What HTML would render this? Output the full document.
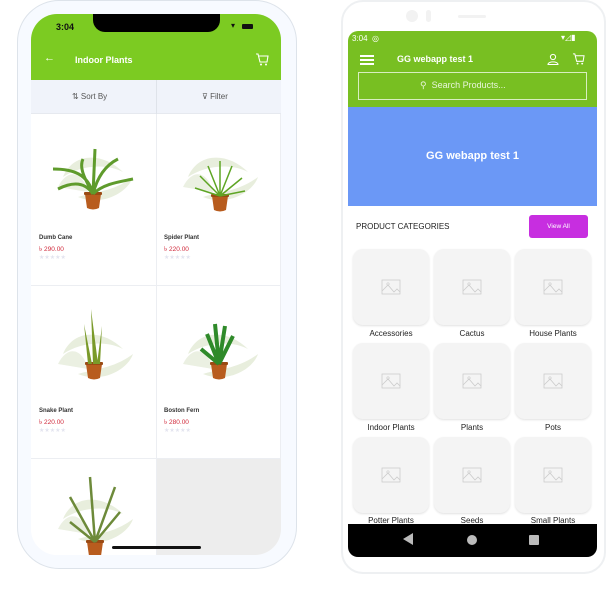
<!DOCTYPE html>
<html><head><meta charset="utf-8"><style>
*{box-sizing:border-box;margin:0;padding:0}
body{width:611px;height:589px;background:#fff;position:relative;overflow:hidden;font-family:"Liberation Sans",sans-serif}
.abs{position:absolute}
.lframe{left:17px;top:0;width:280px;height:569px;border:1px solid #dde3ea;border-radius:42px;background:#f7faff}
.lscreen{left:31px;top:14px;width:250px;height:541px;border-radius:26px;overflow:hidden;background:#fff}
.cell{position:absolute;background:#fff;border-right:1px solid #eceef2;border-bottom:1px solid #eceef2}
.name{position:absolute;left:8px;font-size:6px;color:#333;font-weight:bold}
.price{position:absolute;left:8px;font-size:6.5px;color:#d0293b}
.stars{position:absolute;left:8px;font-size:6px;color:#e3e4ef;letter-spacing:0}
.rframe{left:341px;top:0;width:265px;height:574px;border:2px solid #eef0f2;border-radius:22px;background:#fff}
.rscreen{left:348px;top:31px;width:249px;height:525px;border-radius:10px;overflow:hidden;background:#fff}
.tile{position:absolute;width:76px;height:76px;background:#f4f4f4;border-radius:10px;box-shadow:0 1px 2px rgba(0,0,0,.12)}
.lab{position:absolute;width:76px;text-align:center;font-size:8px;color:#222}
</style></head><body>
<svg width="0" height="0" style="position:absolute"><defs>
<g id="bg"><path d="M-30 0 C-20 -25 10 -25 30 -5 C10 -15 -15 -10 -30 0Z" fill="#e8eedd"/><path d="M-35 10 C-25 -10 -10 -5 -5 15Z" fill="#ebf0e2"/><path d="M-15 20 C10 30 35 15 40 0 C20 15 0 15 -15 20Z" fill="#e8eedd"/></g>
<g id="pot"><path d="M-8 0 L8 0 L6 14 Q0 17 -6 14Z" fill="#b85c1e"/><rect x="-9" y="-2" width="18" height="3" rx="1" fill="#9a4a14"/></g>
<g id="ph"><rect x="-9" y="-7" width="18" height="14" fill="none" stroke="#ccc" stroke-width="0.8"/><path d="M-9 4 L-3 -2 L3 5 L6 2 L9 5" fill="none" stroke="#ccc" stroke-width="0.8"/><circle cx="-3" cy="-3" r="1.2" fill="none" stroke="#ccc" stroke-width="0.6"/></g>
</defs></svg>

<div class="abs lframe"></div>
<div class="abs lscreen">
 <div class="abs" style="left:0;top:0;width:250px;height:66px;background:#7ccb22"></div>
 <div class="abs" style="left:62px;top:0;width:127px;height:18px;background:#000;border-radius:0 0 12px 12px"></div>
 <div class="abs" style="left:25px;top:8px;font-size:9px;font-weight:bold;color:#111">3:04</div>
 <div class="abs" style="left:211px;top:10px;width:11px;height:5px;background:#111;border-radius:1px"></div>
 <div class="abs" style="left:200px;top:7px;font-size:8px;color:#111">▾</div>
 <div class="abs" style="left:13px;top:38px;font-size:11px;color:#fff">←</div>
 <div class="abs" style="left:44px;top:41px;font-size:9px;font-weight:bold;color:#fff">Indoor Plants</div>
 <svg class="abs" style="left:224px;top:39px" width="14" height="13" viewBox="0 0 14 13"><path d="M1 1h2l2 8h7l1-6H4" fill="none" stroke="#fff" stroke-width="1.1"/><circle cx="6" cy="11.5" r="1" fill="#fff"/><circle cx="11" cy="11.5" r="1" fill="#fff"/></svg>
 <div class="abs" style="left:0;top:66px;width:250px;height:34px;background:#f0f3fa;border-bottom:1px solid #e6e9ef"></div>
 <div class="abs" style="left:125px;top:66px;width:1px;height:34px;background:#dfe3ea"></div>
 <div class="abs" style="left:41px;top:78px;font-size:8px;color:#555">⇅ Sort By</div>
 <div class="abs" style="left:171px;top:78px;font-size:8px;color:#555">⊽ Filter</div>

 <div class="cell" style="left:0;top:100px;width:126px;height:172px"></div>
 <div class="cell" style="left:126px;top:100px;width:124px;height:172px"></div>
 <div class="cell" style="left:0;top:272px;width:126px;height:173px"></div>
 <div class="cell" style="left:126px;top:272px;width:124px;height:173px"></div>
 <div class="cell" style="left:0;top:445px;width:126px;height:100px"></div>
 <div class="abs" style="left:126px;top:445px;width:124px;height:100px;background:#ededed"></div>

 <svg class="abs" style="left:0;top:100px" width="250" height="445">
  <g transform="translate(62,63)"><use href="#bg"/></g>
  <g transform="translate(62,80)"><use href="#pot"/><path d="M0 0 C-5 -20 -20 -25 -40 -25 M0 0 C5 -20 15 -30 25 -35 M0 0 C-10 -15 -25 -10 -35 -5 M0 0 C10 -10 25 -12 40 -15 M0 0 L2 -45 M0 0 C-5 -10 -15 -25 -10 -35" stroke="#5f9b2c" stroke-width="3" fill="none"/></g>
  <g transform="translate(187,63)"><use href="#bg"/></g>
  <g transform="translate(189,82)"><use href="#pot"/><path d="M0 0 L-20 -20 M0 0 L-12 -30 M0 0 L0 -35 M0 0 L12 -30 M0 0 L22 -18 M0 0 L-25 -8 M0 0 L25 -5" stroke="#5ea524" stroke-width="1.5" fill="none"/></g>
  <g transform="translate(62,240)"><use href="#bg"/></g>
  <g transform="translate(63,250)"><use href="#pot"/><path d="M-6 0 L-10 -40 L-2 0Z M-1 0 L-3 -55 L4 0Z M3 0 L8 -38 L6 0Z" fill="#7a9a2a"/></g>
  <g transform="translate(187,240)"><use href="#bg"/></g>
  <g transform="translate(188,250)"><use href="#pot"/><path d="M0 0 L-12 -30 M0 0 L-4 -40 M0 0 L6 -38 M0 0 L14 -28 M0 0 L-18 -15" stroke="#2f8a2a" stroke-width="4" fill="none"/></g>
  <g transform="translate(62,405)"><use href="#bg"/></g>
  <g transform="translate(64,428)"><use href="#pot"/><path d="M0 0 L-25 -45 M0 0 L-5 -65 M0 0 L20 -55 M0 0 L25 -30 M0 0 L-25 -20" stroke="#6d8a3a" stroke-width="2.5" fill="none"/></g>
 </svg>
 <div class="name" style="top:221px">Dumb Cane</div><div class="price" style="top:230px">৳ 290.00</div><div class="stars" style="top:240px">★★★★★</div>
 <div class="name" style="left:133px;top:221px">Spider Plant</div><div class="price" style="left:133px;top:230px">৳ 220.00</div><div class="stars" style="left:133px;top:240px">★★★★★</div>
 <div class="name" style="top:394px">Snake Plant</div><div class="price" style="top:403px">৳ 220.00</div><div class="stars" style="top:413px">★★★★★</div>
 <div class="name" style="left:133px;top:394px">Boston Fern</div><div class="price" style="left:133px;top:403px">৳ 280.00</div><div class="stars" style="left:133px;top:413px">★★★★★</div>
 <div class="abs" style="left:81px;top:532px;width:89px;height:3px;background:#111;border-radius:2px"></div>
</div>

<div class="abs rframe"></div>
<div class="abs" style="left:406px;top:10px;width:12px;height:12px;border-radius:50%;background:#f2f2f2"></div>
<div class="abs" style="left:426px;top:10px;width:5px;height:12px;border-radius:3px;background:#f2f2f2"></div>
<div class="abs" style="left:458px;top:15px;width:28px;height:3px;border-radius:2px;background:#f2f2f2"></div>
<div class="abs rscreen">
 <div class="abs" style="left:0;top:0;width:249px;height:76px;background:#78bf22"></div>
 <div class="abs" style="left:4px;top:3px;font-size:8px;color:#fff">3:04 &nbsp;◎</div>
 <div class="abs" style="left:213px;top:2px;font-size:8px;color:#fff">▾◿▮</div>
 <div class="abs" style="left:12px;top:24px;width:14px;height:2px;background:#fff;box-shadow:0 4px 0 #fff,0 8px 0 #fff"></div>
 <div class="abs" style="left:49px;top:23px;font-size:9px;font-weight:bold;color:#fff">GG webapp test 1</div>
 <svg class="abs" style="left:199px;top:22px" width="12" height="12" viewBox="0 0 12 12"><circle cx="6" cy="4" r="2.6" fill="none" stroke="#fff"/><path d="M1 11.5C1 8 11 8 11 11.5Z" fill="none" stroke="#fff"/></svg>
 <svg class="abs" style="left:224px;top:22px" width="13" height="12" viewBox="0 0 14 13"><path d="M1 1h2l2 8h7l1-6H4" fill="none" stroke="#fff" stroke-width="1.1"/><circle cx="6" cy="11.5" r="1" fill="#fff"/><circle cx="11" cy="11.5" r="1" fill="#fff"/></svg>
 <div class="abs" style="left:10px;top:41px;width:229px;height:28px;border:1px solid #d8eec0"></div>
 <div class="abs" style="left:72px;top:49px;font-size:9px;color:#e8f5da">⚲ &nbsp;Search Products...</div>
 <div class="abs" style="left:0;top:76px;width:249px;height:99px;background:#6b98f6"></div>
 <div class="abs" style="left:0;top:119px;width:249px;text-align:center;font-size:11px;font-weight:bold;color:#fff">GG webapp test 1</div>
 <div class="abs" style="left:8px;top:191px;font-size:8px;color:#222">PRODUCT CATEGORIES</div>
 <div class="abs" style="left:181px;top:184px;width:59px;height:23px;border-radius:3px;background:#c72ee0;color:#fff;font-size:6.5px;text-align:center;line-height:23px">View All</div>
</div>
<div class="abs" style="left:0;top:0;width:611px;height:589px;pointer-events:none">
 <div class="tile" style="left:353px;top:249px"></div><div class="tile" style="left:434px;top:249px"></div><div class="tile" style="left:515px;top:249px"></div>
 <div class="tile" style="left:353px;top:343px"></div><div class="tile" style="left:434px;top:343px"></div><div class="tile" style="left:515px;top:343px"></div>
 <div class="tile" style="left:353px;top:437px"></div><div class="tile" style="left:434px;top:437px"></div><div class="tile" style="left:515px;top:437px"></div>
 <svg class="abs" style="left:0;top:0" width="611" height="589">
  <g transform="translate(391,287)"><use href="#ph"/></g><g transform="translate(472,287)"><use href="#ph"/></g><g transform="translate(553,287)"><use href="#ph"/></g>
  <g transform="translate(391,381)"><use href="#ph"/></g><g transform="translate(472,381)"><use href="#ph"/></g><g transform="translate(553,381)"><use href="#ph"/></g>
  <g transform="translate(391,475)"><use href="#ph"/></g><g transform="translate(472,475)"><use href="#ph"/></g><g transform="translate(553,475)"><use href="#ph"/></g>
 </svg>
 <div class="lab" style="left:353px;top:329px">Accessories</div><div class="lab" style="left:434px;top:329px">Cactus</div><div class="lab" style="left:515px;top:329px">House Plants</div>
 <div class="lab" style="left:353px;top:423px">Indoor Plants</div><div class="lab" style="left:434px;top:423px">Plants</div><div class="lab" style="left:515px;top:423px">Pots</div>
 <div class="lab" style="left:353px;top:516px">Potter Plants</div><div class="lab" style="left:434px;top:516px">Seeds</div><div class="lab" style="left:515px;top:516px">Small Plants</div>
 <div class="abs" style="left:348px;top:524px;width:249px;height:33px;background:#000;border-radius:0 0 10px 10px"></div>
 <div class="abs" style="left:403px;top:533px;width:0;height:0;border-top:6px solid transparent;border-bottom:6px solid transparent;border-right:10px solid #bbb"></div>
 <div class="abs" style="left:467px;top:535px;width:10px;height:10px;border-radius:50%;background:#bbb"></div>
 <div class="abs" style="left:529px;top:535px;width:10px;height:10px;background:#bbb;border-radius:1px"></div>
</div>
</body></html>
